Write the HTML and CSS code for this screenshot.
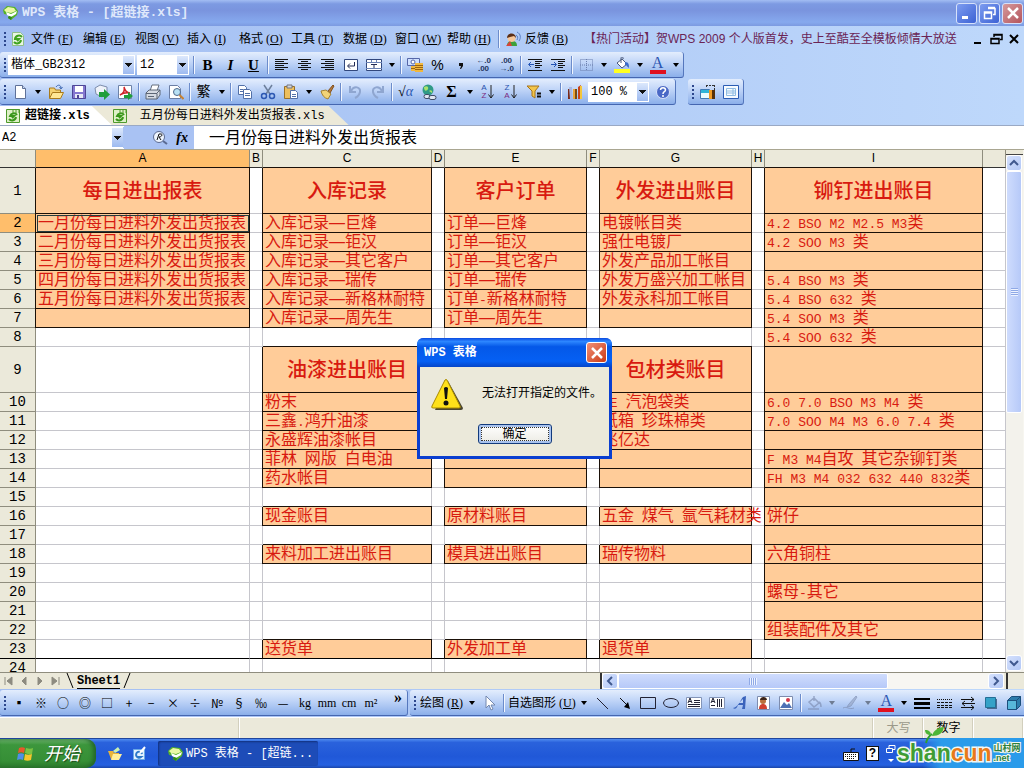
FILE: index.html
```html
<!DOCTYPE html>
<html lang="zh-CN">
<head>
<meta charset="utf-8">
<title>WPS 表格 - [超链接.xls]</title>
<link rel="stylesheet" href="styles.css">
</head>
<body>
<svg class="defs" aria-hidden="true">
  <symbol id="logo" viewBox="0 0 16 16"><path d="M1 5 5 1l8 1 3 4-1 4-6 5-3-2 1-3-5-1z" fill="#55b228"/><path d="m2 5 4-3 6 1 2 3-5 2-5-1z" fill="#eaf8a6"/><path d="m4 7 5 2 6-3-1 3-5 3-4-2z" fill="#fff"/><path d="m7 11 3 1-1 3-3-2z" fill="#2f8a1a"/></symbol>
  <symbol id="doc" viewBox="0 0 16 16"><path d="M2.500 1.500h8l3 3v10h-11z" fill="#eaf6e4" stroke="#8fbf88"/><path d="M12 6a4 4 0 0 0-7 2h4l-2 2M4 11a4 4 0 0 0 7-2" fill="none" stroke="#3fa31e" stroke-width="2"/></symbol>
  <symbol id="xls" viewBox="0 0 16 16"><path d="M1.500 1.500h13v13h-13z" fill="#dff0c8" stroke="#4f9a2c"/><path d="M12 7a4 4 0 0 0-7 1h4l-2 2M4 11a4 4 0 0 0 7-2" fill="none" stroke="#3a971b" stroke-width="2"/><path d="M8 1v4M11 1v4M14 1v4" stroke="#4f9a2c"/></symbol>
  <symbol id="tri" viewBox="0 0 8 16"><path d="M1 6h6L4 10z"/></symbol>
</svg>

<header class="titlebar">
  <svg class="ic"><use href="#logo"/></svg>
  <h1>WPS 表格 - [超链接.xls]</h1>
  <div class="winbtns">
    <button aria-label="最小化"><svg class="ic" viewBox="0 0 16 16"><path d="M3 11h6v3H3z" fill="#fff"/></svg></button>
    <button aria-label="还原"><svg class="ic" viewBox="0 0 16 16"><path d="M6 3.500h7v6h-2M6 2.500h7M2.500 7v6.500h7V7zM2.500 8h7" fill="none" stroke="#fff" stroke-width="1.500"/></svg></button>
    <button class="close" aria-label="关闭"><svg class="ic" viewBox="0 0 16 16"><path d="m3 3 10 10M13 3 3 13" stroke="#fff" stroke-width="2.500"/></svg></button>
  </div>
</header>

<nav class="menubar">
  <span class="grip"></span>
  <svg class="ic"><use href="#doc"/></svg>
  <div class="menus">
    <button>文件 (<u>F</u>)</button><button>编辑 (<u>E</u>)</button><button>视图 (<u>V</u>)</button><button>插入 (<u>I</u>)</button><button>格式 (<u>O</u>)</button><button>工具 (<u>T</u>)</button><button>数据 (<u>D</u>)</button><button>窗口 (<u>W</u>)</button><button>帮助 (<u>H</u>)</button>
  </div>
  <span class="sep"></span>
  <button class="feedback"><svg class="ic" viewBox="0 0 16 16"><path d="M2 15c0-4 2-5 5-5s5 1 5 5z" fill="#3ea03a"/><circle cx="6.500" cy="7" r="4" fill="#f6c79a"/><path d="M2 7c0-6 9-6 9 0L9 5 5 6z" fill="#5b2e16"/><path d="m1 15 4-5 2 5z" fill="#d8433a"/><path d="M11 4c2 1 2 3 1 5M12 1c4 2 4 6 2 9" fill="none" stroke="#5a7fc4"/></svg><span>反馈 (<u>B</u>)</span></button>
  <a class="news" href="#">【热门活动】贺WPS 2009 个人版首发，史上至酷至全模板倾情大放送</a>
  <div class="docbtns">
    <button aria-label="最小化文档"><svg class="ic" viewBox="0 0 16 16"><path d="M4 11h7v2H4z"/></svg></button>
    <button aria-label="还原文档"><svg class="ic" viewBox="0 0 16 16"><path d="M6 6V3.500h8v5h-2M6 4h8M3 7.500h8v5H3zM3 8h8" fill="none" stroke="#000" stroke-width="1.500"/></svg></button>
    <button aria-label="关闭文档"><svg class="ic" viewBox="0 0 16 16"><path d="m4 4 8 8M12 4l-8 8" stroke="#000" stroke-width="2"/></svg></button>
  </div>
</nav>

<div class="toolbars">
  <div class="bar">
    <span class="grip"></span>
    <label class="combo font"><select aria-label="字体"><option>楷体_GB2312</option></select></label>
    <label class="combo size"><select aria-label="字号"><option>12</option></select></label>
    <span class="sep"></span>
    <button class="tb letter" aria-label="加粗"><b>B</b></button>
    <button class="tb letter" aria-label="倾斜"><i>I</i></button>
    <button class="tb letter" aria-label="下划线"><u>U</u></button>
    <span class="sep"></span>
    <button class="tb" aria-label="左对齐"><svg class="ic" viewBox="0 0 16 16"><path d="M1 2.500h13M1 4.500h9M1 6.500h13M1 8.500h9M1 10.500h13M1 12.500h9" stroke="#111"/></svg></button>
    <button class="tb" aria-label="居中"><svg class="ic" viewBox="0 0 16 16"><path d="M1 2.500h13M4 4.500h7M1 6.500h13M4 8.500h7M1 10.500h13M4 12.500h7" stroke="#111"/></svg></button>
    <button class="tb" aria-label="右对齐"><svg class="ic" viewBox="0 0 16 16"><path d="M1 2.500h13M5 4.500h9M1 6.500h13M5 8.500h9M1 10.500h13M5 12.500h9" stroke="#111"/></svg></button>
    <button class="tb" aria-label="自动换行"><svg class="ic" viewBox="0 0 16 16"><path d="M1.500 2.500h13v11h-13z" fill="#fff" stroke="#31477c"/><path d="M11.500 5v4H5M7 6.500 4.500 9 7 11.500" fill="none" stroke="#222b55"/></svg></button>
    <button class="tb" aria-label="合并单元格"><svg class="ic" viewBox="0 0 16 16"><path d="M.5 2.500h15v11H.5z" fill="#fff" stroke="#31477c"/><path d="M0 5.500h16M0 11.500h16M5.500 3v2M10.500 3v2" stroke="#6b82b4"/><path d="M5 7.500h6M8 7v4" stroke="#222b55"/></svg></button>
    <button class="dd" aria-label="合并选项"><svg><use href="#tri"/></svg></button>
    <span class="sep"></span>
    <button class="tb" aria-label="货币"><svg class="ic" viewBox="0 0 16 16"><path d="M.5 1.500h12v7H.5z" fill="#cfe0ff" stroke="#5667a8"/><circle cx="6" cy="5" r="2" fill="#fff" stroke="#5667a8"/><path d="M8 6h8v9H8zM4 9h4v5H4z" fill="#f0b840"/><path d="M8 8.500h8M8 10.500h8M8 12.500h8M4 11.500h4" stroke="#9a6410"/></svg></button>
    <button class="tb pct" aria-label="百分比">%</button>
    <button class="tb" aria-label="千位分隔"><svg class="ic" viewBox="0 0 16 16"><path d="M6 6h4v3l-2 3H7l1-3H6z" fill="#111"/></svg></button>
    <button class="tb dec" aria-label="增加小数位"><span>←.0</span><span>.00</span></button>
    <button class="tb dec" aria-label="减少小数位"><span>.00</span><span>→.0</span></button>
    <span class="sep"></span>
    <button class="tb" aria-label="减少缩进"><svg class="ic" viewBox="0 0 16 16"><path d="M1 2.500h14M8 4.500h7M8 6.500h5M8 8.500h7M8 10.500h5M1 13.500h14" stroke="#111"/><path d="M7 7.500H2M4 5 1.500 7.500 4 10" fill="none" stroke="#2353b5"/></svg></button>
    <button class="tb" aria-label="增加缩进"><svg class="ic" viewBox="0 0 16 16"><path d="M1 2.500h14M8 4.500h7M8 6.500h5M8 8.500h7M8 10.500h5M1 13.500h14" stroke="#111"/><path d="M1 7.500h5M4 5l2.500 2.500L4 10" fill="none" stroke="#2353b5"/></svg></button>
    <span class="sep"></span>
    <button class="tb" aria-label="边框"><svg class="ic" viewBox="0 0 16 16"><path d="M2.500 2.500h12v11h-12zM8.500 2v12M2 8h13" fill="none" stroke="#6b7fae" stroke-dasharray="1 1"/></svg></button>
    <button class="dd" aria-label="边框选项"><svg><use href="#tri"/></svg></button>
    <button class="tb" aria-label="填充颜色"><svg class="ic" viewBox="0 0 16 16"><path d="M0 12h16v4H0z" fill="#ffff20"/><path d="m3 6 5-4 5 5-5 4z" fill="#fff" stroke="#49587a"/><path d="M7 6V1c0-2 3-1 2 1" fill="none" stroke="#49587a"/><path d="M11 5c4 0 4 3 4 6-2-1-2-3-4-3z" fill="#3b6cc8"/></svg></button>
    <button class="dd" aria-label="填充选项"><svg><use href="#tri"/></svg></button>
    <button class="tb colorA" aria-label="字体颜色">A</button>
    <button class="dd" aria-label="颜色选项"><svg><use href="#tri"/></svg></button>
  </div>

  <div class="barrow">
    <div class="bar">
      <span class="grip"></span>
      <button class="tb" aria-label="新建"><svg class="ic" viewBox="0 0 16 16"><path d="M3.500 1.500h7l3 3v10h-10z" fill="#fff" stroke="#5f7199"/><path d="M10.500 1.500v3h3" fill="#c9d7f0" stroke="#5f7199"/></svg></button>
      <button class="dd" aria-label="新建选项"><svg><use href="#tri"/></svg></button>
      <button class="tb" aria-label="打开"><svg class="ic" viewBox="0 0 16 16"><path d="M1.500 14V4h5l1 2h5v3" fill="#f5d271" stroke="#a87a1c"/><path d="m1.500 14.500 3-6h11l-3 6z" fill="#ffe795" stroke="#a87a1c"/><path d="M8 3c2-3 5-2 5 1M11.500 3 13 5l1.500-2" fill="none" stroke="#3d67b1"/></svg></button>
      <button class="tb" aria-label="保存"><svg class="ic" viewBox="0 0 16 16"><path d="M1.500 1.500h13v13h-13z" fill="#8578d0" stroke="#4d4596"/><path d="M4 2h8v6H4z" fill="#fff"/><path d="M4 10h8v4H4z" fill="#e6e8f4"/><path d="M6 11h2v3H6z" fill="#4d4596"/></svg></button>
      <button class="tb" aria-label="导出"><svg class="ic" viewBox="0 0 16 16"><path d="M1 4 6 1l7 2v6l-5 4-6-3z" fill="#eef2fa" stroke="#7d8dac"/><path d="M5 8h5V5l6 5.500L10 16v-3H5z" fill="#1f9e3a"/></svg></button>
      <button class="tb" aria-label="输出 PDF"><svg class="ic" viewBox="0 0 16 16"><path d="M1.500 1.500h13v13h-13z" fill="#fff" stroke="#6d83a8"/><path d="M3 11c4-2 5-5 4-8 1 4 3 6 6 6-4-1-7 0-10 2z" fill="none" stroke="#d0232a" stroke-width="1.500"/><path d="M7 11h4V8l5 4-5 4v-2H7z" fill="#1f9e3a"/></svg></button>
      <span class="sep"></span>
      <button class="tb" aria-label="打印"><svg class="ic" viewBox="0 0 16 16"><path d="m5 7 2-6h7l-2 6" fill="#fff" stroke="#66707f"/><path d="m1 9 3-3h11v5l-3 4H1z" fill="#d5dae2" stroke="#5c6675"/><path d="M1 9.500h11V15M3 12.500h6" fill="none" stroke="#5c6675"/><path d="m12 9 3-3" stroke="#5c6675"/></svg></button>
      <button class="tb" aria-label="打印预览"><svg class="ic" viewBox="0 0 16 16"><path d="M1.500 1.500h8l3 3v10h-11z" fill="#fff" stroke="#6c7ea4"/><circle cx="9" cy="8" r="3.500" fill="#b9e1f4" stroke="#51698a"/><path d="m11.500 11 4 4" stroke="#c78232" stroke-width="2"/></svg></button>
      <span class="sep"></span>
      <button class="tb fan" aria-label="简繁转换">繁</button>
      <button class="dd" aria-label="转换选项"><svg><use href="#tri"/></svg></button>
      <span class="sep"></span>
      <button class="tb" aria-label="复制"><svg class="ic" viewBox="0 0 16 16"><path d="M1.500 1.500h6l2 2v7h-8z" fill="#fff" stroke="#5270a8"/><path d="M6.500 5.500h6l2 2v7h-8z" fill="#fff" stroke="#5270a8"/><path d="M3 5.500h3M3 7.500h3M8 9.500h5M8 11.500h5" stroke="#5270a8"/></svg></button>
      <button class="tb" aria-label="剪切"><svg class="ic" viewBox="0 0 16 16"><path d="m4 1 6 9M12 1 6 10" stroke="#6d7f9c" stroke-width="1.500"/><circle cx="4" cy="12" r="2.500" fill="none" stroke="#2c57b2" stroke-width="1.500"/><circle cx="12" cy="12" r="2.500" fill="none" stroke="#2c57b2" stroke-width="1.500"/></svg></button>
      <button class="tb" aria-label="粘贴"><svg class="ic" viewBox="0 0 16 16"><path d="M1.500 2.500h10v12h-10z" fill="#edbf5d" stroke="#98702a"/><path d="M4 1h5v3H4z" fill="#d3d6dd" stroke="#72757e"/><path d="M7.500 6.500h5l2 2v6h-7z" fill="#fff" stroke="#5270a8"/><path d="M9 10.500h4M9 12.500h4" stroke="#5270a8"/></svg></button>
      <button class="dd" aria-label="粘贴选项"><svg><use href="#tri"/></svg></button>
      <button class="tb" aria-label="格式刷"><svg class="ic" viewBox="0 0 16 16"><path d="m9 7 5-6 1 1-4 7z" fill="#b8793a" stroke="#80501e"/><path d="m2 7 5-1 5 4-3 5c-4-1-6-4-7-8z" fill="#f2d377" stroke="#a58332"/></svg></button>
      <span class="sep"></span>
      <button class="tb" aria-label="撤销" disabled><svg class="ic" viewBox="0 0 16 16"><path d="M4 7c3-6 10-4 9 1-.5 3-3 5-5 6M3 2v6h6" fill="none" stroke="#8fa6d0" stroke-width="2"/></svg></button>
      <button class="tb" aria-label="恢复" disabled><svg class="ic" viewBox="0 0 16 16"><path d="M12 7C9 1 2 3 3 8c.5 3 3 5 5 6M13 2v6H7" fill="none" stroke="#8fa6d0" stroke-width="2"/></svg></button>
      <span class="sep"></span>
      <button class="tb root" aria-label="公式">√<i>α</i></button>
      <button class="tb" aria-label="超链接"><svg class="ic" viewBox="0 0 16 16"><circle cx="7" cy="6" r="5.500" fill="#2f9a86"/><path d="M3 3c3-2 5 0 4 2S3 8 3 3zM8 7c2-2 4 0 3 2z" fill="#a9e36c"/><rect x="3" y="10.500" width="6" height="4" rx="2" fill="#dfe6f2" stroke="#3e4c66"/><rect x="8" y="11.500" width="7" height="4" rx="2" fill="#dfe6f2" stroke="#3e4c66"/></svg></button>
      <button class="tb sigma" aria-label="自动求和">Σ</button>
      <button class="dd" aria-label="求和选项"><svg><use href="#tri"/></svg></button>
      <button class="tb sort" aria-label="升序"><span><b>A</b><b>Z</b></span><svg viewBox="0 0 6 16"><path d="M3 1v13M.5 10.500 3 14l2.500-3.500" fill="none" stroke="#222"/></svg></button>
      <button class="tb sort" aria-label="降序"><span><b>Z</b><b>A</b></span><svg viewBox="0 0 6 16"><path d="M3 1v13M.5 10.500 3 14l2.500-3.500" fill="none" stroke="#222"/></svg></button>
      <button class="tb" aria-label="筛选"><svg class="ic" viewBox="0 0 16 16"><path d="M1 2h12L9 7v7l-3-2V7z" fill="#f3c64b" stroke="#a8741b"/><path d="M11 9.500h4M11 12.500h4" stroke="#111" stroke-width="2"/></svg></button>
      <button class="dd" aria-label="筛选选项"><svg><use href="#tri"/></svg></button>
      <span class="sep"></span>
      <button class="tb" aria-label="图表"><svg class="ic" viewBox="0 0 16 16"><path d="M1 5h4v10H1z" fill="#7a2a18"/><path d="M2 3h3v12H3z" fill="#a9b8e4"/><path d="M6 5h4v10H6z" fill="#e8a33b"/><path d="M8 5h2v10H8z" fill="#7a4a10"/><path d="m11 3 3-2v14h-3z" fill="#c84318"/><path d="M13 2h2v13h-2z" fill="#f3c63c"/></svg></button>
      <label class="combo zoom"><select aria-label="显示比例"><option>100 %</option></select></label>
      <button class="tb" aria-label="帮助"><svg class="ic" viewBox="0 0 16 16"><circle cx="8" cy="8" r="6.500" fill="#4a68c6" stroke="#d8e2fb"/><path d="M5.500 6c0-3 5-3 5 0 0 2-2.500 1.500-2.500 4M8 11v2" fill="none" stroke="#fff" stroke-width="1.500"/></svg></button>
    </div>
    <div class="bar">
      <span class="grip"></span>
      <button class="tb" aria-label="任务窗格"><svg class="ic" viewBox="0 0 16 16"><path d="M.5 5.500h9v9h-9z" fill="#e9fbff" stroke="#3f79b5"/><path d="M1 6h9v3H1z" fill="#2fb5d8"/><path d="M9 6h6v9H9z" fill="#ef9b25"/><path d="M12 6h3v9h-3z" fill="#55300a"/><path d="M6 1.500h9M6.500 1v3M14.500 1v5" stroke="#333" stroke-dasharray="2 1"/></svg></button>
      <button class="tb" aria-label="阅读版式"><svg class="ic" viewBox="0 0 16 16"><path d="M.5 1.500h15v13H.5z" fill="#f7fbff" stroke="#2c5db4"/><path d="M3.500 4.500h9v7h-9zM3 7h10M3 9h10M10 4v8" fill="none" stroke="#8fbce2"/></svg></button>
    </div>
  </div>
</div>

<div class="doctabs">
  <button class="tab active"><svg class="ic"><use href="#xls"/></svg><span>超链接.xls</span></button>
  <button class="tab"><svg class="ic"><use href="#xls"/></svg><span>五月份每日进料外发出货报表.xls</span></button>
</div>

<div class="formulabar">
  <label class="namebox"><input aria-label="名称框" value="A2"></label>
  <div class="fx">
    <button aria-label="查找"><svg class="ic" viewBox="0 0 16 16"><circle cx="7" cy="7" r="5.500" fill="#eef5ff" stroke="#5a6a92"/><path d="m11 11 4 3" stroke="#5a6a92" stroke-width="2"/><path d="M5 10 7 4h2c2 0 1 3-2 3l2 3" fill="none" stroke="#111"/></svg></button>
    <button aria-label="插入函数"><i>fx</i></button>
  </div>
  <input class="formula" aria-label="编辑栏" value="一月份每日进料外发出货报表">
</div>

<main class="sheet">
  <div class="gridwrap">
  <table class="grid">
    <colgroup><col class="c-h"><col class="c-a"><col class="c-s"><col class="c-c"><col class="c-s"><col class="c-e"><col class="c-s"><col class="c-g"><col class="c-s"><col class="c-i"><col></colgroup>
    <thead><tr><th></th><th class="cur">A</th><th>B</th><th>C</th><th>D</th><th>E</th><th>F</th><th>G</th><th>H</th><th>I</th><th></th></tr></thead>
    <tbody>
    <tr class="tall"><th>1</th><td class="f">每日进出报表</td><td></td><td class="f">入库记录</td><td></td><td class="f">客户订单</td><td></td><td class="f">外发进出账目</td><td></td><td class="f">铆钉进出账目</td><td></td></tr>
    <tr><th class="cur">2</th><td class="f sel">一月份每日进料外发出货报表</td><td></td><td class="f">入库记录—巨烽</td><td></td><td class="f">订单—巨烽</td><td></td><td class="f">电镀帐目类</td><td></td><td class="f"><span class="en">4.2 BSO M2 M2.5 M3</span>类</td><td></td></tr>
    <tr><th>3</th><td class="f">二月份每日进料外发出货报表</td><td></td><td class="f">入库记录—钜汉</td><td></td><td class="f">订单—钜汉</td><td></td><td class="f">强仕电镀厂</td><td></td><td class="f"><span class="en">4.2 SOO M3 </span>类</td><td></td></tr>
    <tr><th>4</th><td class="f">三月份每日进料外发出货报表</td><td></td><td class="f">入库记录—其它客户</td><td></td><td class="f">订单—其它客户</td><td></td><td class="f">外发产品加工帐目</td><td></td><td class="f"></td><td></td></tr>
    <tr><th>5</th><td class="f">四月份每日进料外发出货报表</td><td></td><td class="f">入库记录—瑞传</td><td></td><td class="f">订单—瑞传</td><td></td><td class="f">外发万盛兴加工帐目</td><td></td><td class="f"><span class="en">5.4 BSO M3 </span>类</td><td></td></tr>
    <tr><th>6</th><td class="f">五月份每日进料外发出货报表</td><td></td><td class="f">入库记录—新格林耐特</td><td></td><td class="f">订单<span class="en">-</span>新格林耐特</td><td></td><td class="f">外发永科加工帐目</td><td></td><td class="f"><span class="en">5.4 BSO 632 </span>类</td><td></td></tr>
    <tr><th>7</th><td class="f"></td><td></td><td class="f">入库记录—周先生</td><td></td><td class="f">订单—周先生</td><td></td><td class="f"></td><td></td><td class="f"><span class="en">5.4 SOO M3 </span>类</td><td></td></tr>
    <tr><th>8</th><td></td><td></td><td></td><td></td><td></td><td></td><td></td><td></td><td class="f"><span class="en">5.4 SOO 632 </span>类</td><td></td></tr>
    <tr class="tall"><th>9</th><td></td><td></td><td class="f">油漆进出账目</td><td></td><td class="f"></td><td></td><td class="f">包材类账目</td><td></td><td class="f"></td><td></td></tr>
    <tr><th>10</th><td></td><td></td><td class="f">粉末</td><td></td><td class="f"></td><td></td><td class="f"><span class="en">PE </span>汽泡袋类</td><td></td><td class="f"><span class="en">6.0 7.0 BSO M3 M4 </span>类</td><td></td></tr>
    <tr><th>11</th><td></td><td></td><td class="f">三鑫<span class="en">.</span>鸿升油漆</td><td></td><td class="f"></td><td></td><td class="f">纸箱<span class="en"> </span>珍珠棉类</td><td></td><td class="f"><span class="en">7.0 SOO M4 M3 6.0 7.4 </span>类</td><td></td></tr>
    <tr><th>12</th><td></td><td></td><td class="f">永盛辉油漆帐目</td><td></td><td class="f"></td><td></td><td class="f">兆亿达</td><td></td><td class="f"></td><td></td></tr>
    <tr><th>13</th><td></td><td></td><td class="f">菲林<span class="en"> </span>网版<span class="en"> </span>白电油</td><td></td><td class="f"></td><td></td><td class="f"></td><td></td><td class="f"><span class="en">F M3 M4</span>自攻<span class="en"> </span>其它杂铆钉类</td><td></td></tr>
    <tr><th>14</th><td></td><td></td><td class="f">药水帐目</td><td></td><td class="f"></td><td></td><td class="f"></td><td></td><td class="f"><span class="en">FH M3 M4 032 632 440 832</span>类</td><td></td></tr>
    <tr><th>15</th><td></td><td></td><td></td><td></td><td></td><td></td><td></td><td></td><td class="f"></td><td></td></tr>
    <tr><th>16</th><td></td><td></td><td class="f">现金账目</td><td></td><td class="f">原材料账目</td><td></td><td class="f">五金<span class="en"> </span>煤气<span class="en"> </span>氩气耗材类</td><td></td><td class="f">饼仔</td><td></td></tr>
    <tr><th>17</th><td></td><td></td><td></td><td></td><td></td><td></td><td></td><td></td><td class="f"></td><td></td></tr>
    <tr><th>18</th><td></td><td></td><td class="f">来料加工进出账目</td><td></td><td class="f">模具进出账目</td><td></td><td class="f">瑞传物料</td><td></td><td class="f">六角铜柱</td><td></td></tr>
    <tr><th>19</th><td></td><td></td><td></td><td></td><td></td><td></td><td></td><td></td><td class="f"></td><td></td></tr>
    <tr><th>20</th><td></td><td></td><td></td><td></td><td></td><td></td><td></td><td></td><td class="f">螺母<span class="en">-</span>其它</td><td></td></tr>
    <tr><th>21</th><td></td><td></td><td></td><td></td><td></td><td></td><td></td><td></td><td class="f"></td><td></td></tr>
    <tr><th>22</th><td></td><td></td><td></td><td></td><td></td><td></td><td></td><td></td><td class="f">组装配件及其它</td><td></td></tr>
    <tr class="last"><th>23</th><td></td><td></td><td class="f">送货单</td><td></td><td class="f">外发加工单</td><td></td><td class="f">退货单</td><td></td><td></td><td></td></tr>
    <tr><th>24</th><td></td><td></td><td></td><td></td><td></td><td></td><td></td><td></td><td></td><td></td></tr>
    </tbody>
  </table>
  </div>
  <div class="vscroll">
    <span class="split"></span>
    <button class="sb" aria-label="向上滚动"><svg viewBox="0 0 10 10"><path d="m1 7 4-4 4 4"/></svg></button>
    <div class="track"><span class="thumb"></span></div>
    <button class="sb" aria-label="向下滚动"><svg viewBox="0 0 10 10"><path d="m1 3 4 4 4-4"/></svg></button>
  </div>
</main>

<div class="sheettabs">
  <div class="navs">
    <button aria-label="首张"><svg class="ic" viewBox="0 0 16 16"><path d="M5 4v8M12 4 7 8l5 4z"/></svg></button>
    <button aria-label="上一张"><svg class="ic" viewBox="0 0 16 16"><path d="M10 4 6 8l4 4z"/></svg></button>
    <button aria-label="下一张"><svg class="ic" viewBox="0 0 16 16"><path d="m6 4 4 4-4 4z"/></svg></button>
    <button aria-label="末张"><svg class="ic" viewBox="0 0 16 16"><path d="M11 4v8M4 4l5 4-5 4z"/></svg></button>
  </div>
  <button class="stab"><svg viewBox="0 0 8 16"><path d="m1 0 6 15"/></svg><span>Sheet1</span><svg viewBox="0 0 8 16"><path d="M7 0 1 15"/></svg></button>
  <div class="hscroll">
    <span class="vsplit"></span>
    <button class="sb" aria-label="向左滚动"><svg viewBox="0 0 10 10"><path d="M7 1 3 5l4 4"/></svg></button>
    <div class="track"><span class="thumb"></span></div>
    <button class="sb" aria-label="向右滚动"><svg viewBox="0 0 10 10"><path d="m3 1 4 4-4 4"/></svg></button>
    <span class="vsplit"></span>
  </div>
</div>

<div class="bottombars">
  <div class="bar symbols">
    <span class="grip"></span>
    <button>▪</button><button>※</button><button>○</button><button>◎</button><button>□</button><button>+</button><button>−</button><button>×</button><button>÷</button><button>№</button><button>§</button><button>‰</button><button>—</button><button class="unit">kg</button><button class="unit">mm</button><button class="unit">cm</button><button class="unit">m²</button>
    <button class="more">»</button>
  </div>
  <div class="bar draw">
    <span class="grip"></span>
    <button class="txt">绘图 (<u>R</u>)</button>
    <button class="dd" aria-label="绘图菜单"><svg><use href="#tri"/></svg></button>
    <button class="tb" aria-label="选择对象"><svg class="ic" viewBox="0 0 16 16"><path d="M4 1v12l3-3 2 5 2-1-2-4h4z" fill="#fff" stroke="#7387ae"/></svg></button>
    <span class="sep"></span>
    <button class="txt">自选图形 (<u>U</u>)</button>
    <button class="dd" aria-label="自选图形菜单"><svg><use href="#tri"/></svg></button>
    <button class="tb" aria-label="直线"><svg class="ic" viewBox="0 0 16 16"><path d="m3 3 11 11" stroke="#223"/></svg></button>
    <button class="tb" aria-label="箭头"><svg class="ic" viewBox="0 0 16 16"><path d="m3 3 8 8" stroke="#111"/><path d="m13 14-6-2 4-5z"/></svg></button>
    <button class="tb" aria-label="矩形"><svg class="ic" viewBox="0 0 16 16"><path d="M.5 2.500h15v11H.5z" fill="none" stroke="#223"/></svg></button>
    <button class="tb" aria-label="椭圆"><svg class="ic" viewBox="0 0 16 16"><ellipse cx="8" cy="8" rx="7.500" ry="4.500" fill="none" stroke="#223"/></svg></button>
    <button class="tb" aria-label="文本框"><svg class="ic" viewBox="0 0 16 16"><path d="M.5 2.500h15v11H.5z" fill="#fff" stroke="#8294b8"/><path d="m2 8 2-5 2 5M3 6.500h2M8 5.500h6M8 7.500h6M2 9.500h12M2 11.500h12" fill="none" stroke="#223"/></svg></button>
    <button class="tb" aria-label="竖排文本框"><svg class="ic" viewBox="0 0 16 16"><path d="M.5 2.500h15v11H.5z" fill="#fff" stroke="#8294b8"/><path d="m2 8 2-5 2 5M3 6.500h2M8.500 4v8M10.500 4v8M12.500 4v8M2 10.500h4" fill="none" stroke="#223"/></svg></button>
    <button class="tb" aria-label="艺术字"><svg class="ic" viewBox="0 0 16 16"><path d="M1 13C6 12 8 6 11 2l3-1-1 13h-3l1-4H6c-1 3-3 5-5 3zm6-5h4V4z" fill="#3a63bc"/></svg></button>
    <button class="tb" aria-label="剪贴画"><svg class="ic" viewBox="0 0 16 16"><path d="M2.500 1.500h12v13h-12z" fill="#fff" stroke="#7d8cae"/><circle cx="8" cy="6" r="3" fill="#b9703c"/><path d="M5 5c0-4 7-4 7 0z" fill="#3d2418"/><path d="M4 14c0-4 2-5 4-5s4 1 4 5z" fill="#d1402f"/></svg></button>
    <button class="tb" aria-label="图片"><svg class="ic" viewBox="0 0 16 16"><path d="M1.500 1.500h13v13h-13z" fill="#fff" stroke="#7d8cae"/><path d="m2 13 4-6 3 3 2-2 3 5z" fill="#4e70b4"/><circle cx="10" cy="5" r="2" fill="#d3374b"/></svg></button>
    <span class="sep"></span>
    <button class="tb dim" aria-label="填充" disabled><svg class="ic" viewBox="0 0 16 16"><path d="m3 7 5-4 5 5-5 4zM8 6V1M13 7c2 1 2 3 2 5M2 14h11" fill="none" stroke="#8090b4" stroke-width="1.500"/></svg></button>
    <button class="dd dim" aria-label="填充选项" disabled><svg><use href="#tri"/></svg></button>
    <button class="tb dim" aria-label="线条颜色" disabled><svg class="ic" viewBox="0 0 16 16"><path d="m14 1-7 8-2 3 4-1 6-9zM1 13c4-2 6 2 11 0" fill="#98a8c8" stroke="#8090b4"/></svg></button>
    <button class="dd dim" aria-label="线条选项" disabled><svg><use href="#tri"/></svg></button>
    <button class="tb colorA" aria-label="字体颜色">A</button>
    <button class="dd" aria-label="字体颜色选项"><svg><use href="#tri"/></svg></button>
    <button class="tb" aria-label="线型"><svg class="ic" viewBox="0 0 16 16"><path d="M0 3h16v2H0zM0 7h16v3H0zM0 12h16v2H0z"/></svg></button>
    <button class="tb" aria-label="虚线"><svg class="ic" viewBox="0 0 16 16"><path d="M0 4.500h16" stroke="#111" stroke-dasharray="1 1"/><path d="M0 7.500h16M0 10.500h16M0 12.500h16" stroke="#111" stroke-dasharray="3 1"/></svg></button>
    <button class="tb" aria-label="箭头样式"><svg class="ic" viewBox="0 0 16 16"><path d="M1 4.500h13M2 8.500h13M1 12.500h13M11 2l3 2.500L11 7M5 6 2 8.500 5 11M11 10l3 2.500-3 2.500" fill="none" stroke="#111"/></svg></button>
    <button class="tb" aria-label="阴影"><svg class="ic" viewBox="0 0 16 16"><path d="M4 4h10v10H4z" fill="#4a6a90"/><path d="M2.500 2.500h10v10h-10z" fill="#35a2c8" stroke="#246f96"/></svg></button>
    <button class="tb" aria-label="三维"><svg class="ic" viewBox="0 0 16 16"><path d="M1.500 5.500h9v9h-9z" fill="#58b7da" stroke="#1c4f7c"/><path d="m1.500 5.500 4-4h9l-4 4zM10.500 5.500l4-4v9l-4 4z" fill="#2c7cac" stroke="#1c4f7c"/></svg></button>
  </div>
</div>

<div class="status"><span class="s1"></span><span class="s2"></span><span class="cap">大写</span><span class="num">数字</span><span class="s3"></span></div>

<footer class="taskbar">
  <button class="start"><svg class="flag" viewBox="0 0 20 18"><path d="M3 3c2-1 4-1 6 0L8 8C6 7 4 7 2 8z" fill="#e9572b"/><path d="M10 3c3 1 5 1 7 0l-1 6c-2 1-4 0-7-1z" fill="#7cc242"/><path d="M2 9c2-1 4-1 6 0l-1 6c-2-1-4-1-6 0z" fill="#4f8fe8"/><path d="M9 9c2 1 5 1 7 0l-1 6c-2 1-5 1-7 0z" fill="#f5c62c"/></svg><i>开始</i></button>
  <div class="quick">
    <button aria-label="文件夹"><svg class="ic" viewBox="0 0 16 16"><path d="M1 5h5l1 2h5v6H4z" fill="#e8b53a"/><path d="m4 14 2-6h9l-3 6z" fill="#fff09a"/><path d="m6 5 5-4 2 3-5 3z" fill="#c9f0b2"/></svg></button>
    <button aria-label="显示桌面"><svg class="ic" viewBox="0 0 16 16"><path d="M2.500 3.500h11v10h-11z" fill="#e4f2ff" stroke="#6ba9e6"/><path d="M11 8a3 3 0 1 0-1 3H6" fill="none" stroke="#2d79c9" stroke-width="2"/><path d="m9 7 5-6" stroke="#fff" stroke-width="2"/></svg></button>
  </div>
  <button class="task"><svg class="ic"><use href="#logo"/></svg>WPS 表格 - [超链...</button>
  <div class="tray">
    <svg class="ic" viewBox="0 0 16 16"><path d="M.5 6.500h15v8H.5z" fill="#fff" stroke="#111"/><path d="M2 8.500h12M2 10.500h12M4 12.500h8" stroke="#111" stroke-dasharray="1 1"/><path d="M8 6V3h4" fill="none" stroke="#111"/></svg>
    <span class="q">?</span>
    <svg class="restore" viewBox="0 0 10 20"><path d="M3 4V1.500h6v4H7M.5 4.500h6v4h-6z" fill="none" stroke="#fff"/><path d="M2 15h6l-3 3z" fill="#fff"/></svg>
  </div>
  <div class="mark">
    <svg class="leaf" viewBox="0 0 24 18"><path d="M1 17c1-4 3-7 6-9" fill="none" stroke="#2e9e2e" stroke-width="2"/><path d="M7 10c1-5 6-9 12-9-1 6-5 9-12 9zM6 9C2 9 0 7 0 4c4 0 6 2 6 5z" fill="#4db537"/></svg>
    <span class="green">shan</span><span class="orange">cun</span>
    <span class="small"><b>山村网</b><b>.net</b></span>
  </div>
</footer>

<section class="dialog" role="alertdialog" aria-labelledby="dt">
  <header><h2 id="dt">WPS 表格</h2><button class="x" aria-label="关闭"><svg viewBox="0 0 16 16"><path d="m3 3 10 10M13 3 3 13" stroke="#fff" stroke-width="2.500"/></svg></button></header>
  <div class="body">
    <svg class="warn" viewBox="0 0 32 32"><path d="M17 2 32 29q0 2-2 2H4z" fill="#4a4530"/><path d="M14 1q1-1 2 0l13 26q1 2-1 2H2q-2 0-1-2z" fill="#ffe11a" stroke="#a88a00"/><path d="M13 9q2-2 4 0l-1 11h-2z" fill="#111"/><circle cx="15" cy="24" r="2.500" fill="#111"/></svg>
    <p>无法打开指定的文件。</p>
  </div>
  <button class="ok">确定</button>
</section>
</body>
</html>
```
FILE: styles.css
```css
* { box-sizing: border-box; }
body {
  margin: 0; height: 100vh; display: flex; flex-direction: column; overflow: hidden; position: relative;
  background: linear-gradient(90deg, #a3bef2, #bed8fb);
  font: 12px/16px "Liberation Serif", "Noto Sans CJK SC", sans-serif; color: #000;
}
button, input, select { font: inherit; color: inherit; margin: 0; padding: 0; border: 0; background: none; }
button { display: flex; align-items: center; justify-content: center; white-space: nowrap; }
h1, h2, p { margin: 0; }
.defs { position: absolute; width: 0; height: 0; }
.ic { width: 16px; height: 16px; flex: none; display: block; }

.titlebar {
  height: 26px; flex: none; display: flex; align-items: center; padding: 0 1px 0 2px; gap: 4px;
  background: linear-gradient(#a2bdf3 0, #7d9ae2 15%, #7a94de 40%, #86a9ee 85%, #7c9ae0);
}
.titlebar h1 { flex: 1; font: bold 13px/18px "Liberation Mono", "Noto Sans CJK SC", monospace; color: #dfe8fb; }
.winbtns { display: flex; gap: 2px; }
.winbtns button { width: 21px; height: 21px; border: 1px solid #d6e1fa; border-radius: 3px; background: linear-gradient(135deg, #7d9cf0, #3c62d4); }
.winbtns .close { background: linear-gradient(135deg, #d69a9c, #b4545c); }

.menubar { height: 26px; flex: none; display: flex; align-items: center; padding-left: 2px; }
.grip { width: 8px; height: 16px; flex: none; background: radial-gradient(circle, #2c468c 1px, transparent 1px) 0 0 / 6px 4px repeat-y; }
.menus { display: flex; margin-left: 5px; }
.menus button { width: 52px; justify-content: flex-start; }
.sep { width: 5px; height: 18px; flex: none; background: linear-gradient(90deg, transparent 2px, #6c8ccb 2px 3px, #f1f6ff 3px 4px, transparent 4px); }
.menubar .sep { margin-left: -3px; }
.feedback { margin-left: 4px; gap: 4px; }
.news { margin-left: 16px; flex: 1; white-space: nowrap; color: #6a2455; text-decoration: none; font-family: "Liberation Sans", "Noto Sans CJK SC", sans-serif; }
.docbtns { display: flex; gap: 2px; padding-right: 2px; }

.toolbars { flex: none; display: flex; flex-direction: column; align-items: flex-start; gap: 1px; }
.barrow { display: flex; gap: 12px; }
.bar {
  height: 26px; display: flex; align-items: center; padding: 0 1px 0 2px; border-radius: 3px;
  background: linear-gradient(#e3edfd, #c2d6f8 40%, #8bafea); border-right: 1px solid #5577bd; border-bottom: 1px solid #4566b0;
}
.bar .grip { width: 6px; }
.tb { width: 23px; height: 22px; flex: none; }
.dd { width: 13px; height: 22px; flex: none; }
.dd svg { width: 8px; height: 16px; }
.dim { opacity: .7; }
.dim.dd { opacity: .4; }
.combo { display: flex; flex: none; height: 20px; margin-right: 2px; background: #fff; position: relative; }
.combo select { appearance: none; width: 100%; padding-left: 3px; font: 12px/18px "Liberation Mono", "Noto Sans CJK SC", monospace; }
.combo::after, .namebox::after {
  content: ""; position: absolute; right: 1px; top: 1px; bottom: 1px; width: 11px; pointer-events: none;
  background: conic-gradient(from -45deg at 50% 100%, #111 90deg, transparent 0) center / 7px 4px no-repeat, linear-gradient(#dce8fc, #9dbaf0);
}
/* the wedge points down on the drop-down arrows */
.combo::after, .namebox::after { background: conic-gradient(from -45deg at 50% 100%, #111 90deg, transparent 0) center / 7px 4px no-repeat, linear-gradient(#dce8fc, #9dbaf0); }
.font { width: 127px; }
.size { width: 52px; }
.zoom { width: 61px; margin-left: 2px; }
.letter { font-size: 15px; font-weight: bold; }
.pct { font: 14px "Liberation Sans", sans-serif; }
.dec { flex-direction: column; font: bold 8px/8px "Liberation Sans", "DejaVu Sans", sans-serif; color: #24345f; }
.colorA { font: 16px/14px "Liberation Serif", serif; color: #2a55b0; flex-direction: column; }
.colorA::after { content: ""; width: 16px; height: 4px; background: #e01020; }
.fan { font-size: 14px; }
.root { font: 14px "Liberation Serif", "DejaVu Sans", serif; }
.root i { color: #2c57b2; }
.sigma { font-size: 16px; font-weight: bold; }
.sort { gap: 1px; }
.sort span { display: flex; flex-direction: column; font: 8px/8px "Liberation Sans", sans-serif; }
.sort b { font-weight: normal; color: #2952ad; }
.sort b:last-child { color: #7c2a80; }
.sort svg { width: 6px; height: 16px; }

.doctabs { height: 21px; flex: none; display: flex; align-items: flex-end; border-bottom: 1px solid #9aa9c4; }
.tab {
  height: 19px; padding: 0 24px 0 28px; margin-left: -28px; gap: 12px;
  background: #ece9d8; clip-path: polygon(0 0, calc(100% - 20px) 0, 100% 100%, 0 100%);
  font: 12px/18px "Liberation Mono", "Noto Sans CJK SC", monospace;
}
.tab.active { margin: 0; padding: 0 22px 0 5px; gap: 4px; background: #fff; font-weight: bold; z-index: 1; }

.formulabar { height: 23px; flex: none; display: flex; align-items: center; background: #fff; }
.namebox { width: 124px; height: 21px; display: flex; position: relative; }
.namebox input { width: 100%; padding-left: 2px; background: #fff; font: 12px "Liberation Mono", monospace; border-right: 1px solid #a9c3f3; }
.fx { align-self: stretch; width: 70px; display: flex; align-items: center; justify-content: flex-end; gap: 8px; padding-right: 6px; background: #a9c2f3; }
.fx button { height: 20px; }
.fx i { font: italic bold 14px "Liberation Serif", serif; }
.formula { flex: 1; padding-left: 15px; background: #fff; font: 16px/20px "Liberation Sans", "Noto Sans CJK SC", sans-serif; }

.sheet { flex: 1; min-height: 0; display: flex; background: #f7f6f0; border-top: 1px solid #a9a691; overflow: hidden; }
.gridwrap { flex: 1; overflow: hidden; background: #fff; }
.grid { width: 100%; table-layout: fixed; border-collapse: separate; border-spacing: 0; }
.c-h { width: 36px; } .c-a { width: 214px; } .c-s { width: 13px; } .c-c { width: 169px; }
.c-e { width: 142px; } .c-g { width: 152px; } .c-i { width: 218px; }
.grid th, .grid td { height: 19px; padding: 0; border-right: 1px solid #c6c6cc; border-bottom: 1px solid #c6c6cc; white-space: nowrap; }
.grid th { background: #ebe9da; border-color: #8f8d7e; font: 14px/18px "Liberation Mono", monospace; }
.grid thead th { height: 18px; font: 12px/17px "Liberation Sans", sans-serif; border-bottom-color: #333; }
.grid .cur { background: #ffbe6b; }
.grid td { padding-left: 2px; font: 16px/18px "Liberation Sans", "Noto Sans CJK SC", sans-serif; color: #d81a10; }
.grid td.f { background: #ffcc99; border-color: #1a1008; box-shadow: -1px 0 0 #1a1008, 0 -1px 0 #1a1008; }
.grid .tall td, .grid .tall th { height: 46px; }
.grid .tall td { font-size: 20px; font-weight: 500; text-align: center; padding: 0; }
.grid td.sel { outline: 1px solid #243b3c; outline-offset: -2px; }
.grid .last td, .grid .last th { border-bottom-color: #000; }
.en { font: 13px/14px "Liberation Mono", monospace; white-space: pre; }

.vscroll { width: 17px; flex: none; margin-right: 1px; display: flex; flex-direction: column; padding-bottom: 1px; background: #f3f2ec; }
.split { height: 5px; background: #ebe9da; border-bottom: 1px solid #444; }
.sb { width: 16px; height: 16px; flex: none; border: 1px solid #fff; border-radius: 3px; background: linear-gradient(135deg, #d5e1fd, #b3c8f6); }
.sb svg { width: 10px; height: 10px; fill: none; stroke: #40598f; stroke-width: 2; }
.track { flex: 1; display: flex; }
.thumb { border: 1px solid #fff; border-radius: 2px; }
.vscroll .thumb { width: 16px; height: 50%; background: repeating-linear-gradient(#8fa9e6 0 1px, #eef3ff 1px 2px) center / 7px 8px no-repeat, linear-gradient(90deg, #cfdcfd, #b6c9f8); }
.hscroll .thumb { width: 73%; height: 16px; background: repeating-linear-gradient(90deg, #8fa9e6 0 1px, #eef3ff 1px 2px) center / 8px 7px no-repeat, linear-gradient(#cfdcfd, #b6c9f8); }

.sheettabs { height: 17px; flex: none; display: flex; background: #ebe9da; border-top: 1px solid #8f8d7e; }
.navs { display: flex; width: 66px; }
.navs svg { fill: #8d8b80; stroke: #8d8b80; }
.stab { font: bold 12px/14px "Liberation Mono", monospace; gap: 3px; }
.stab span { border-bottom: 1px solid #000; }
.stab svg { width: 8px; height: 16px; fill: none; stroke: #000; }
.hscroll { margin-left: auto; margin-right: 16px; width: 40%; display: flex; background: #f7f6f2; }
.vsplit { width: 4px; background: #ebe9da; border-right: 2px solid #333; }

.bottombars { flex: none; display: flex; gap: 2px; padding: 1px 0; }
.symbols { flex: none; font: 12px/16px "Noto Sans CJK SC", "DejaVu Sans", sans-serif; }
.symbols button { width: 22px; }
.symbols .unit { font: 12px/16px "Liberation Serif", serif; }
.symbols .more { margin-left: 8px; width: 16px; font: bold 16px/16px "Liberation Serif", serif; align-self: flex-start; }
.draw { flex: 1; }
.txt { padding: 0 2px; }

.status { height: 21px; flex: none; display: flex; background: #ebe9da; line-height: 20px; border-top: 1px solid #fff; }
.status span { border-right: 1px solid #fff; box-shadow: inset -1px 0 0 #d2cfbd; }
.s1 { width: 240px; }
.s2 { flex: 1; }
.cap, .num { width: 50px; text-align: center; }
.cap { color: #9b998a; }
.s3 { width: 50px; }

.taskbar { height: 30px; flex: none; display: flex; align-items: center; position: relative; background: linear-gradient(#4f8bf0 0, #2a62dc 12%, #2058d8 60%, #2560e0 90%, #1a45a8); border-top: 1px solid #20459c; }
.start { width: 96px; height: 29px; gap: 8px; border-radius: 0 10px 10px 0; background: linear-gradient(#72b872, #3c963c 20%, #368f36 75%, #2c7a2c); box-shadow: inset -3px 0 4px #23662a; color: #fff; }
.start i { font: italic 18px/24px "Liberation Sans", "Noto Sans CJK SC", sans-serif; text-shadow: 1px 1px 1px #1c4a1c; }
.flag { width: 20px; height: 18px; }
.quick { display: flex; gap: 8px; margin: 0 11px; }
.task { width: 160px; height: 25px; justify-content: flex-start; gap: 3px; padding-left: 9px; border-radius: 2px; background: #1d4cb8; box-shadow: inset 1px 1px 2px #12307c; color: #fff; font: 12px/16px "Liberation Mono", "Noto Sans CJK SC", monospace; }
.tray { margin-left: auto; margin-right: 128px; display: flex; align-items: center; gap: 7px; }
.q { width: 13px; height: 15px; text-align: center; background: #fff; border: 1px solid #111; font: bold 12px/13px "Liberation Sans", sans-serif; }
.restore { width: 10px; height: 20px; }
.mark { position: absolute; right: 0; bottom: 0; width: 127px; height: 30px; display: flex; align-items: center; background: linear-gradient(90deg, transparent 20%, #2a9bea 35%); font: bold 23px/30px "Liberation Sans", sans-serif; white-space: nowrap; -webkit-text-stroke: 3px #f2f7f2; paint-order: stroke fill; }
.green { color: #3f9c35; }
.orange { color: #e87a1a; }
.leaf { position: absolute; left: 28px; top: -12px; width: 24px; height: 18px; }
.small { display: flex; flex-direction: column; margin-left: 2px; color: #2b7f3a; font: 9px/10px "Liberation Sans", "Noto Sans CJK SC", sans-serif; -webkit-text-stroke: 2px #f2f7f2; }

.dialog { position: absolute; left: 417px; top: 338px; width: 195px; height: 121px; display: flex; flex-direction: column; border: 3px solid #0a3ed0; border-top: 0; border-radius: 7px 7px 0 0; background: #ebe9da; }
.dialog header { height: 29px; display: flex; align-items: center; justify-content: space-between; margin: 0 -3px; padding: 0 5px 0 7px; border-radius: 6px 6px 0 0; background: linear-gradient(#0a4ae0, #2c86ff 12%, #0458e8 30%, #0560f4 80%, #0645c8); }
.dialog h2 { font: bold 12px/16px "Liberation Mono", "Noto Sans CJK SC", monospace; color: #fff; }
.x { width: 21px; height: 21px; border: 1px solid #fff; border-radius: 3px; background: linear-gradient(135deg, #f09078, #cc3a14); }
.x svg { width: 16px; height: 16px; }
.body { display: flex; gap: 19px; padding: 12px 0 0 11px; height: 57px; }
.body p { padding-top: 6px; white-space: nowrap; }
.warn { width: 32px; height: 32px; flex: none; }
.ok { align-self: center; width: 74px; height: 20px; border: 1px solid #123a7c; border-radius: 3px; background: linear-gradient(#fff, #ecebe4); box-shadow: inset 0 0 0 2px #a9c3ee; outline: 1px dotted #333; outline-offset: -4px; }
```
